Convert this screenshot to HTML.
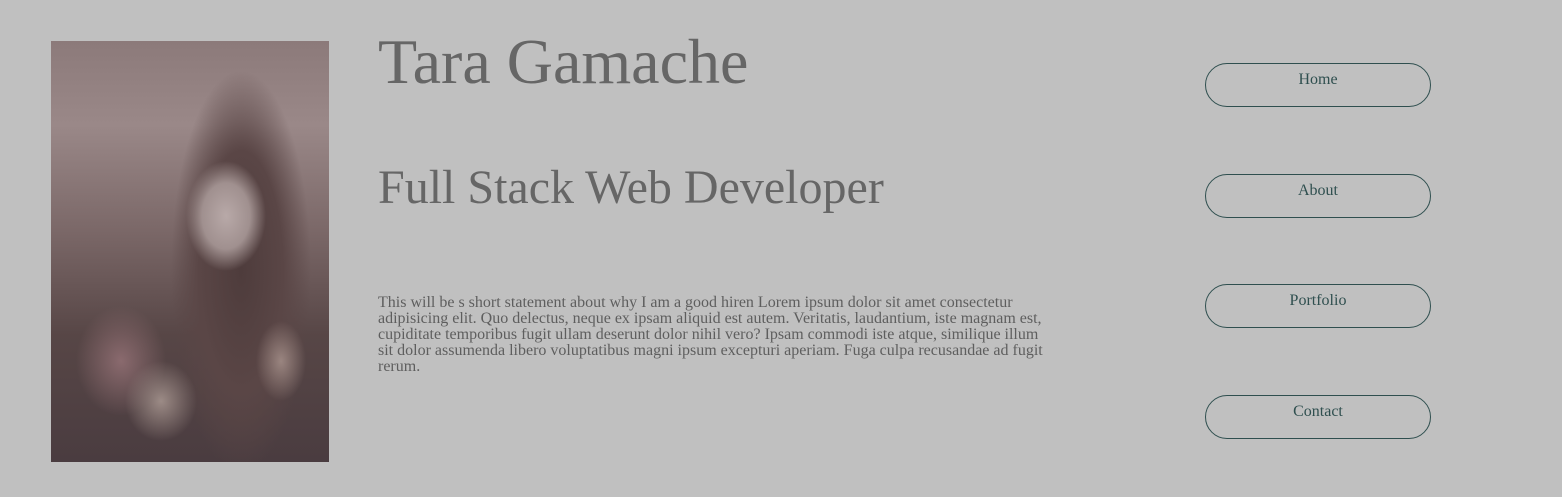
<!DOCTYPE html>
<html><head><style>
body{margin:0;width:1562px;height:497px;background:#c0c0c0;font-family:"Liberation Serif",serif;position:relative;overflow:hidden}
.photo{position:absolute;left:51px;top:41px;width:278px;height:421px;background:
radial-gradient(ellipse 40px 55px at 175px 175px,#b8a9a8 0%,#a0908f 60%,transparent 100%),
radial-gradient(ellipse 36px 40px at 110px 360px,#9c8b86 0%,transparent 100%),
radial-gradient(ellipse 45px 55px at 70px 320px,#8a6a6e 0%,transparent 100%),
radial-gradient(ellipse 25px 40px at 230px 320px,#9a8580 0%,transparent 100%),
radial-gradient(ellipse 70px 200px at 190px 230px,#4e3c3c 0%,#5a4646 60%,transparent 100%),
linear-gradient(180deg,#8c7a7a 0%,#9a8888 20%,#7b6868 45%,#574646 70%,#4a3c40 100%)}
h1{position:absolute;left:378px;top:27px;margin:0;font-weight:normal;font-size:64px;color:#666;line-height:70px}
h2{position:absolute;left:378px;top:160px;margin:0;font-weight:normal;font-size:48px;color:#666;line-height:56px}
p{position:absolute;left:378px;top:295px;width:670px;margin:0;font-size:16px;line-height:16px;color:#5e5e5e}
.b{position:absolute;left:1205px;width:224px;height:42px;border:1px solid #2f4f4f;border-radius:22px;text-align:center;font-size:16px;color:#2f4f4f;line-height:31px}
</style></head><body>
<div class="photo"></div>
<h1>Tara Gamache</h1>
<h2>Full Stack Web Developer</h2>
<p>This will be s short statement about why I am a good hiren Lorem ipsum dolor sit amet consectetur adipisicing elit. Quo delectus, neque ex ipsam aliquid est autem. Veritatis, laudantium, iste magnam est, cupiditate temporibus fugit ullam deserunt dolor nihil vero? Ipsam commodi iste atque, similique illum sit dolor assumenda libero voluptatibus magni ipsum excepturi aperiam. Fuga culpa recusandae ad fugit rerum.</p>
<div class="b" style="top:63px">Home</div>
<div class="b" style="top:174px">About</div>
<div class="b" style="top:284px">Portfolio</div>
<div class="b" style="top:395px">Contact</div>
</body></html>
